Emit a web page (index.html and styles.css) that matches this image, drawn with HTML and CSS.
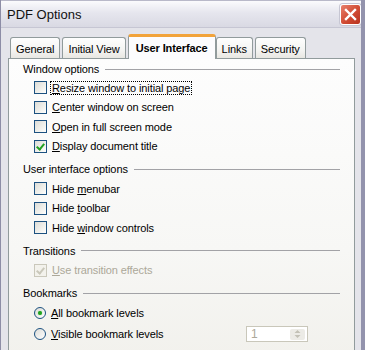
FILE: index.html
```html
<!DOCTYPE html>
<html>

<head>
    <meta charset="utf-8">
    <title>PDF Options</title>
    <link rel="stylesheet" href="styles.css">
</head>

<body>
    <div class="window">
        <div class="titlebar">
            <span class="title">PDF Options</span>
            <span class="close">
                <svg width="13" height="13" viewBox="0 0 13 13">
                    <path d="M2 2 L11 11 M11 2 L2 11" stroke="#fff" stroke-width="2.4" stroke-linecap="square"/>
                </svg>
            </span>
        </div>
        <div class="client">
            <div class="tabs">
                <div class="tab">General</div>
                <div class="tab">Initial View</div>
                <div class="tab active">User Interface</div>
                <div class="tab">Links</div>
                <div class="tab">Security</div>
            </div>
            <div class="panel">
                <div class="group">
                    <div class="group-title"><span>Window options</span></div>
                    <label class="row"><span class="box"></span><span class="text focus"><u>R</u>esize window to initial page</span></label>
                    <label class="row"><span class="box"></span><span class="text"><u>C</u>enter window on screen</span></label>
                    <label class="row"><span class="box"></span><span class="text"><u>O</u>pen in full screen mode</span></label>
                    <label class="row"><span class="box checked"></span><span class="text"><u>D</u>isplay document title</span></label>
                </div>
                <div class="group">
                    <div class="group-title"><span>User interface options</span></div>
                    <label class="row"><span class="box"></span><span class="text">Hide <u>m</u>enubar</span></label>
                    <label class="row"><span class="box"></span><span class="text">Hide <u>t</u>oolbar</span></label>
                    <label class="row"><span class="box"></span><span class="text">Hide <u>w</u>indow controls</span></label>
                </div>
                <div class="group">
                    <div class="group-title"><span>Transitions</span></div>
                    <label class="row disabled"><span class="box checked"></span><span class="text"><u>U</u>se transition effects</span></label>
                </div>
                <div class="group">
                    <div class="group-title"><span>Bookmarks</span></div>
                    <label class="row"><span class="radio on"></span><span class="text"><u>A</u>ll bookmark levels</span></label>
                    <label class="row tall"><span class="radio"></span><span class="text"><u>V</u>isible bookmark levels</span>
                        <span class="spin">
                            <span class="spin-value">1</span>
                            <span class="spin-btn">
                                <svg width="9" height="10" viewBox="0 0 9 10">
                                    <path d="M1.5 4 L4.5 1 L7.5 4 Z M1.5 6 L4.5 9 L7.5 6 Z" fill="#c3c1b6"/>
                                </svg>
                            </span>
                        </span>
                    </label>
                </div>
            </div>
        </div>
    </div>
</body>

</html>
```

FILE: styles.css
```css
body {
margin: 0;
font-family: "Liberation Sans", Arial, sans-serif;
font-size: 11px;
letter-spacing: -0.1px;
color: #000;
}

.window {
width: 365px;
height: 350px;
box-sizing: border-box;
overflow: hidden;
background: #e4e4ea;
border-left: 1px solid #8d8da6;
border-right: 4px solid #9393ad;
}

.titlebar {
height: 28px;
box-sizing: border-box;
display: flex;
align-items: center;
justify-content: space-between;
padding: 0 0 0 6px;
background: linear-gradient(#fbfbfd, #e6e6ee 45%, #d9d9e3);
border-top: 1px solid #b9b9c9;
border-bottom: 1px solid #c6c6d3;
}

.title {
font-size: 13px;
letter-spacing: 0;
color: #111;
}

.close {
width: 21px;
height: 21px;
box-sizing: border-box;
display: flex;
align-items: center;
justify-content: center;
border: 1px solid #fff;
border-radius: 3px;
background: linear-gradient(135deg, #e8806c, #d04a32 55%, #b8321f);
box-shadow: 0 0 0 1px #c6c6d3;
}

.client {
padding: 5px 0 0 7px;
}

.tabs {
display: flex;
align-items: flex-end;
gap: 2px;
padding-left: 2px;
height: 25px;
position: relative;
z-index: 1;
}

.tab {
height: 21px;
box-sizing: border-box;
padding: 1px 5px 0;
line-height: 20px;
border: 1px solid #919b9c;
border-bottom: none;
border-radius: 3px 3px 0 0;
background: linear-gradient(#fefefe, #f4f4f2 60%, #e8e7e2);
}

.tab.active {
height: 25px;
margin: 0 -2px -1px 0;
padding: 0 7px;
line-height: 22px;
font-weight: bold;
background: #fcfcfe;
border-top: 3px solid #f2a33a;
}

.panel {
height: 320px;
box-sizing: border-box;
margin-right: 6px;
padding: 2px 14px 0 14px;
border: 1px solid #919b9c;
background: linear-gradient(#fdfdfd, #f7f7f5 60%, #f1f0eb);
}

.group + .group {
margin-top: 3px;
}

.group-title {
display: flex;
align-items: center;
gap: 6px;
height: 20px;
line-height: 20px;
}

.group:first-child .group-title {
height: 17px;
line-height: 17px;
}

.group-title::after {
content: "";
flex: 1;
height: 1px;
background: #a2a2a6;
}

.row {
display: flex;
align-items: center;
height: 19.5px;
padding-left: 11px;
}

.row.tall {
height: 23px;
}

.box {
width: 13px;
height: 13px;
box-sizing: border-box;
border: 1px solid #1c5180;
background: linear-gradient(135deg, #dcdcd7, #f4f4f0 70%, #fff);
position: relative;
flex: none;
}

.box.checked::after {
content: "";
position: absolute;
left: 3px;
top: 1px;
width: 3px;
height: 6px;
border: solid #21a121;
border-width: 0 2px 2px 0;
transform: rotate(40deg);
}

.radio {
width: 12px;
height: 12px;
box-sizing: border-box;
border: 1px solid #1c5180;
border-radius: 50%;
background: linear-gradient(135deg, #dcdcd7, #fff);
position: relative;
flex: none;
}

.radio.on::after {
content: "";
position: absolute;
left: 3px;
top: 3px;
width: 4px;
height: 4px;
border-radius: 50%;
background: #21a121;
box-shadow: 0 0 1px #5bd35b;
}

.text {
margin-left: 3px;
padding: 0 1px;
line-height: 12px;
border: 1px solid transparent;
}

.text.focus {
border: 1px dotted #000;
}

.disabled .box {
border-color: #cac8bb;
background: #f3f2ec;
}

.disabled .box.checked::after {
border-color: #cac8bb;
}

.disabled .text {
color: #aca899;
}

.spin {
display: flex;
align-items: center;
justify-content: space-between;
width: 62px;
height: 16px;
box-sizing: border-box;
margin-left: auto;
margin-right: 32px;
padding: 0 2px 0 4px;
border: 1px solid #c9c7ba;
background: #fff;
}

.spin-value {
color: #aca899;
font-size: 12px;
}

.spin-btn {
width: 15px;
height: 11px;
display: flex;
align-items: center;
justify-content: center;
background: #ecebe6;
border-radius: 2px;
}
```
